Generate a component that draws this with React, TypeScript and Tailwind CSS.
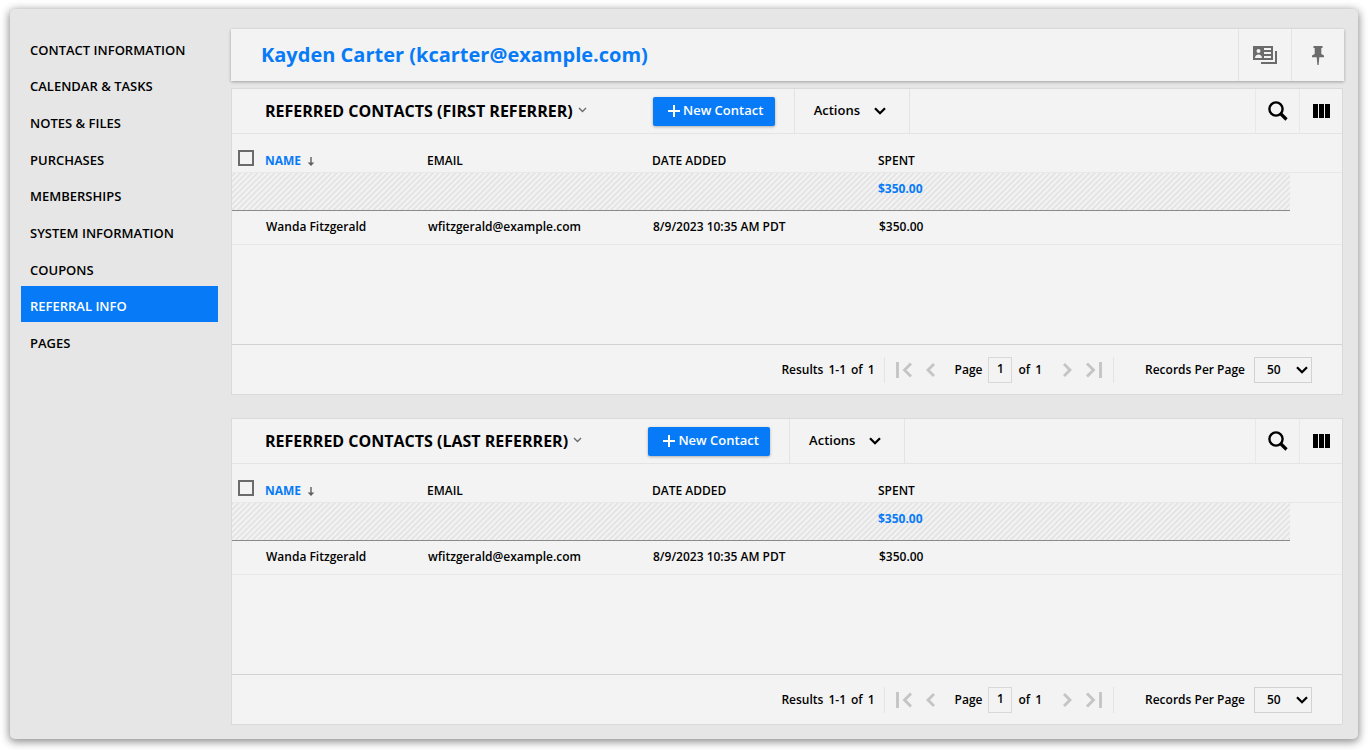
import { useState } from 'react';

const NAV_ITEMS = [
  'Contact Information',
  'Calendar & Tasks',
  'Notes & Files',
  'Purchases',
  'Memberships',
  'System Information',
  'Coupons',
  'Referral Info',
  'Pages',
];

const CONTACTS = [
  {
    name: 'Wanda Fitzgerald',
    email: 'wfitzgerald@example.com',
    added: '8/9/2023 10:35 AM PDT',
    spent: '$350.00',
  },
];

function Chevron({ className }: { className: string }) {
  return (
    <svg viewBox="0 0 12 8" className={className} fill="none" stroke="currentColor" strokeWidth="2.3">
      <path d="M1 1.2l5 5 5-5" />
    </svg>
  );
}

function PageArrow({ dir, edge }: { dir: 'prev' | 'next'; edge?: boolean }) {
  return (
    <svg
      viewBox={edge ? '0 0 16 18' : '0 0 9 18'}
      className={edge ? 'h-[18px] w-4' : 'h-[18px] w-[9px]'}
      fill="none"
      stroke="currentColor"
      strokeWidth="2.8"
    >
      {dir === 'prev' && <path d={edge ? 'M1.5 1v16M15 2.5L8.500 9l6.500 6.500' : 'M8 3L2 9l6 6'} />}
      {dir === 'next' && <path d={edge ? 'M14.500 1v16M1 2.500L7.500 9L1 15.500' : 'M1 3l6 6-6 6'} />}
    </svg>
  );
}

function Sidebar() {
  return (
    <nav className="w-[197px] shrink-0">
      <ul className="grid h-[330px] auto-rows-fr">
        {NAV_ITEMS.map((item) => (
          <li key={item} className="grid">
            <a
              href="#"
              className={
                item === 'Referral Info'
                  ? 'flex items-center bg-[#077bf7] px-[9px] pt-1.5 text-white uppercase'
                  : 'flex items-center px-[9px] pt-1.5 uppercase'
              }
            >
              {item}
            </a>
          </li>
        ))}
      </ul>
    </nav>
  );
}

function ContactHeader() {
  return (
    <header className="flex h-[52px] items-stretch bg-[#f3f3f3] text-[#6b6b6b] shadow-[0_1px_3px_rgba(0,0,0,0.3)]">
      <h1 className="flex-1 self-center pl-[30px] text-xl font-bold text-[#077bf7]">
        Kayden Carter (kcarter@example.com)
      </h1>
      <button aria-label="Contact cards" className="flex w-[53px] items-center justify-center border-l border-[#e3e3e3]">
        <svg viewBox="0 0 24 18" className="h-[18px] w-6" fill="currentColor">
          <path fillRule="evenodd" d="M0 0h20v14H0zM2 12h7c0-2.300-1.500-3.500-3.500-3.500S2 9.700 2 12zM5.500 3a2 2 0 100 4 2 2 0 000-4zM11 2v2h7V2zm0 4v2h7V6zm0 4v2h7v-2z" />
          <path d="M22 5h2v13H8v-2h14z" />
        </svg>
      </button>
      <button aria-label="Pin" className="flex w-[53px] items-center justify-center border-l border-[#e3e3e3]">
        <svg viewBox="0 0 12 19" className="h-[19px] w-3" fill="currentColor">
          <path d="M1.500 0h9v2H9.300v6l2.700 1.500V11.200H7.300L6.600 19H5.400L4.700 11.200H0V9.500L2.700 8V2H1.500z" />
        </svg>
      </button>
    </header>
  );
}

function Pagination({ id }: { id: string }) {
  return (
    <footer className="flex h-[50px] items-center justify-end border-t border-[#d2d2d2] pr-[30px] text-xs">
      <p className="flex gap-[5px] pr-[9px]">
        <span>Results</span>
        <span>1-1</span>
        <span>of</span>
        <span>1</span>
      </p>
      <div className="flex h-[26px] items-center border-x border-[#e4e4e4] px-[11px] text-[#c4c4c4]">
        <button aria-label="First page">
          <PageArrow dir="prev" edge />
        </button>
        <button aria-label="Previous page" className="ml-3.5">
          <PageArrow dir="prev" />
        </button>
        <label htmlFor={`${id}-page`} className="ml-5 text-black">
          Page
        </label>
        <input
          id={`${id}-page`}
          defaultValue="1"
          className="ml-1.5 h-[26px] w-6 border border-[#d8d8d8] bg-transparent pb-0.5 text-center text-black"
        />
        <span className="ml-1.5 flex gap-[5px] text-black">
          <span>of</span>
          <span>1</span>
        </span>
        <button aria-label="Next page" className="ml-[21px]">
          <PageArrow dir="next" />
        </button>
        <button aria-label="Last page" className="ml-3.5">
          <PageArrow dir="next" edge />
        </button>
      </div>
      <label htmlFor={`${id}-size`} className="pr-[9px] pl-[31px]">
        Records Per Page
      </label>
      <div className="relative">
        <select
          id={`${id}-size`}
          className="block h-[26px] w-[58px] appearance-none border border-[#d2d2d2] bg-transparent pl-3"
        >
          <option>50</option>
          <option>100</option>
        </select>
        <Chevron className="pointer-events-none absolute top-[9px] right-1 h-2 w-3" />
      </div>
    </footer>
  );
}

function ReferredPanel({ id, title }: { id: string; title: string }) {
  const [checked, setChecked] = useState(false);

  return (
    <section className="border border-[#dadada] bg-[#f3f3f3]">
      <div className="flex h-[45px] items-stretch border-b border-[#e4e4e4]">
        <h2 className="flex items-center pl-[33px] text-base font-bold uppercase">{title}</h2>
        <button aria-label="Switch group" className="mr-[66px] ml-[5px] pb-0.5 text-[#6b6b6b]">
          <svg viewBox="0 0 9 6" className="h-1.5 w-[9px]" fill="none" stroke="currentColor" strokeWidth="1.4">
            <path d="M1 1l3.500 3.500L8 1" />
          </svg>
        </button>
        <button className="flex h-[29px] w-[122px] items-center justify-center gap-[3px] self-center rounded-xs bg-[#077bf7] pl-1 text-[13px] text-white shadow-[0_1px_3px_rgba(0,0,0,0.3)]">
          <svg viewBox="0 0 12 12" className="size-3" stroke="currentColor" strokeWidth="2">
            <path d="M6 0v12M0 6h12" />
          </svg>
          New Contact
        </button>
        <button className="ml-[19px] flex w-[116px] items-center gap-3.5 border-x border-[#e4e4e4] pl-[19px] text-[13px]">
          Actions
          <Chevron className="h-2 w-3" />
        </button>
        <button aria-label="Search" className="ml-auto flex w-11 items-center justify-center border-l border-[#e8e8e8]">
          <svg viewBox="0 0 20 20" className="size-5" fill="none" stroke="currentColor">
            <circle cx="8" cy="8" r="6.600" strokeWidth="2.400" />
            <path d="M12.500 12.500l6 6" strokeWidth="3.200" />
          </svg>
        </button>
        <button aria-label="Columns" className="flex w-[43px] items-center justify-center border-l border-[#e8e8e8]">
          <svg viewBox="0 0 17 14" className="h-3.5 w-[17px]" fill="currentColor">
            <path d="M0 0h5v14H0zM6 0h5v14H6zM12 0h5v14h-5z" />
          </svg>
        </button>
      </div>

      <div className="h-[210px]">
        <table className="w-full table-fixed text-left text-xs">
          <colgroup>
            <col className="w-[33px]" />
            <col className="w-[162px]" />
            <col className="w-[225px]" />
            <col className="w-[226px]" />
            <col />
            <col className="w-[52px]" />
          </colgroup>
          <thead>
            <tr className="h-[38px] border-b border-[#e8e8e8] align-bottom uppercase">
              <th className="pb-1.5 pl-1.5">
                <input
                  type="checkbox"
                  aria-label="Select all"
                  checked={checked}
                  onChange={() => setChecked(!checked)}
                  className="block size-4 appearance-none border-2 border-[#6b6b6b] checked:bg-[#077bf7]"
                />
              </th>
              <th className="pb-[3px] font-bold text-[#077bf7]">
                <span className="flex items-center gap-1.5">
                  Name
                  <svg viewBox="0 0 8 10" className="h-2.5 w-2" fill="#5f5f5f">
                    <path d="M3.300 1h1.400v5.500H7.300L4 10 .7 6.500h2.600z" />
                  </svg>
                </span>
              </th>
              <th className="pb-[3px] font-semibold">Email</th>
              <th className="pb-[3px] font-semibold">Date Added</th>
              <th className="pb-[3px] font-semibold">Spent</th>
              <th />
            </tr>
          </thead>
          <tbody>
            <tr className="h-[38px]">
              <td
                colSpan={4}
                className="border-b border-[#8a8a8a] bg-[repeating-linear-gradient(135deg,#e4e4e4_0_1px,#f3f3f3_2px_3px,#e4e4e4_4px)] bg-fixed"
              />
              <td className="border-b border-[#8a8a8a] bg-[repeating-linear-gradient(135deg,#e4e4e4_0_1px,#f3f3f3_2px_3px,#e4e4e4_4px)] bg-fixed pb-1 font-bold text-[#077bf7]">
                $350.00
              </td>
              <td />
            </tr>
            {CONTACTS.map((contact) => (
              <tr key={contact.email} className="h-[34px] border-b border-[#e8e8e8]">
                <td />
                <td className="pl-px">{contact.name}</td>
                <td className="pl-px">{contact.email}</td>
                <td className="pl-px">{contact.added}</td>
                <td className="pl-px">{contact.spent}</td>
                <td />
              </tr>
            ))}
          </tbody>
        </table>
      </div>

      <Pagination id={id} />
    </section>
  );
}

export default function App() {
  return (
    <div className="min-h-screen bg-white px-2.5 pt-[9px] pb-[11px] font-['Open_Sans',sans-serif] text-[13px] font-semibold text-black">
      <div className="flex gap-[13px] rounded-[5px] bg-[#e6e6e6] pt-5 pr-3.5 pb-3.5 pl-[11px] shadow-[0_2px_8px_1px_rgba(0,0,0,0.45)]">
        <Sidebar />
        <main className="min-w-0 flex-1">
          <ContactHeader />
          <div className="mt-[7px] mr-px grid gap-[23px]">
            <ReferredPanel id="first" title="Referred Contacts (First Referrer)" />
            <ReferredPanel id="last" title="Referred Contacts (Last Referrer)" />
          </div>
        </main>
      </div>
    </div>
  );
}
